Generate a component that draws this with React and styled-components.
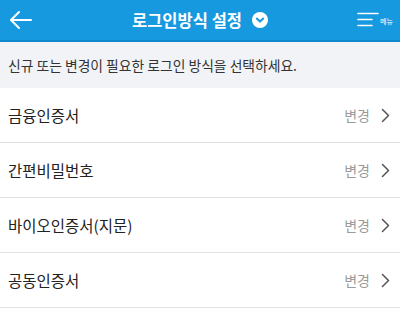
import React from "react";
import styled, { createGlobalStyle } from "styled-components";

const GlobalStyle = createGlobalStyle`
  body {
    margin: 0;
    background: #ffffff;
    font-family: "Noto Sans CJK KR", "Noto Sans", sans-serif;
  }
`;

const Page = styled.div`
  width: 400px;
  height: 315px;
  overflow: hidden;
  background: #fff;
`;

const Header = styled.header`
  height: 40px;
  background: #1699df;
  border-bottom: 2px solid #0f87ca;
  display: grid;
  grid-template-columns: 60px 1fr 60px;
  align-items: center;
`;

const BackButton = styled.div`
  display: flex;
  align-items: center;
  padding-left: 9px;
`;

const Title = styled.h1`
  margin: 0;
  display: flex;
  align-items: center;
  justify-content: center;
  gap: 10px;
  color: #fff;
  font-size: 16.5px;
  font-weight: 700;
`;

const MenuButton = styled.div`
  display: flex;
  align-items: flex-end;
  justify-content: flex-end;
  padding-right: 7px;
  color: #fff;
`;

const MenuLabel = styled.span`
  font-size: 7px;
  line-height: 1;
  margin-left: 1px;
  margin-bottom: 3px;
`;

const Notice = styled.div`
  height: 46px;
  display: flex;
  align-items: center;
  padding: 0 8px;
  background: #f2f3f6;
  color: #333;
  font-size: 13.8px;
`;

const Row = styled.div`
  height: 54px;
  display: flex;
  align-items: center;
  justify-content: space-between;
  padding: 0 10px 0 8px;
  border-bottom: 1px solid #e2e2e2;
`;

const Label = styled.span`
  font-size: 15.5px;
  color: #222;
`;

const Action = styled.span`
  display: flex;
  align-items: center;
  gap: 11px;
  font-size: 14px;
  color: #9a9a9a;
`;

const items = ["금융인증서", "간편비밀번호", "바이오인증서(지문)", "공동인증서"];

export default function App() {
  return (
    <Page>
      <GlobalStyle />
      <Header>
        <BackButton>
          <svg width="24" height="20" viewBox="0 0 24 20">
            <path
              d="M22 10H3M10 2L2 10L10 18"
              fill="none"
              stroke="#fff"
              strokeWidth="2"
              strokeLinecap="round"
              strokeLinejoin="round"
            />
          </svg>
        </BackButton>
        <Title>
          로그인방식 설정
          <svg width="16" height="16" viewBox="0 0 16 16">
            <circle cx="8" cy="8" r="8" fill="#fff" />
            <path
              d="M4.8 6.6L8 9.6L11.2 6.6"
              fill="none"
              stroke="#1699df"
              strokeWidth="2"
              strokeLinecap="round"
              strokeLinejoin="round"
            />
          </svg>
        </Title>
        <MenuButton>
          <svg width="22" height="16" viewBox="0 0 22 16">
            <path
              d="M1 1.5H21M1 7.5H15M1 13.5H15"
              stroke="#fff"
              strokeWidth="1.6"
              strokeLinecap="round"
            />
          </svg>
          <MenuLabel>메뉴</MenuLabel>
        </MenuButton>
      </Header>
      <Notice>신규 또는 변경이 필요한 로그인 방식을 선택하세요.</Notice>
      {items.map((name) => (
        <Row key={name}>
          <Label>{name}</Label>
          <Action>
            변경
            <svg width="9" height="15" viewBox="0 0 9 15">
              <path
                d="M1.5 1.5L7.5 7.5L1.5 13.5"
                fill="none"
                stroke="#555"
                strokeWidth="1.5"
                strokeLinecap="round"
                strokeLinejoin="round"
              />
            </svg>
          </Action>
        </Row>
      ))}
    </Page>
  );
}
